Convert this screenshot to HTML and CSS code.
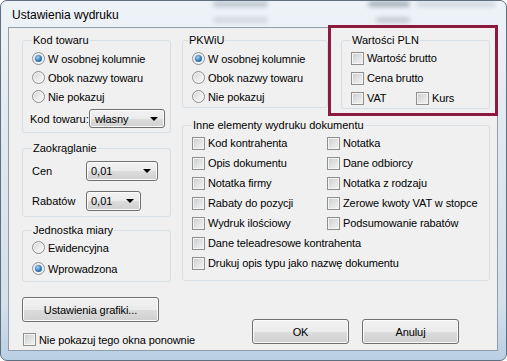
FILE: index.html
```html
<!DOCTYPE html>
<html lang="pl">
<head>
    <meta charset="UTF-8">
    <title>Ustawienia wydruku</title>
    <link rel="stylesheet" href="styles.css">
</head>
<body>

<div class="window">
    <div class="titlebar">
        <!-- blurred content seen through the glass frame -->
        <span class="ghost g1"></span>
        <span class="ghost g2"></span>
        <span class="ghost g3"></span>
        <span class="ghost g4"></span>
        <span class="ghost g5"></span>
        <span class="title">Ustawienia wydruku</span>
    </div>

    <div class="client">
        <div class="col-left">
            <fieldset class="group kod">
                <legend>Kod towaru</legend>
                <label class="opt"><span class="radio on"></span>W osobnej kolumnie</label>
                <label class="opt"><span class="radio"></span>Obok nazwy towaru</label>
                <label class="opt"><span class="radio"></span>Nie pokazuj</label>
                <div class="field-row kod-row">
                    <span class="field-label">Kod towaru:</span>
                    <span class="combo combo-kod">własny<span class="arrow"></span></span>
                </div>
            </fieldset>

            <fieldset class="group zaokr">
                <legend>Zaokrąglanie</legend>
                <div class="field-row">
                    <span class="field-label short">Cen</span>
                    <span class="combo combo-cen">0,01<span class="arrow"></span></span>
                </div>
                <div class="field-row">
                    <span class="field-label short">Rabatów</span>
                    <span class="combo combo-rab">0,01<span class="arrow"></span></span>
                </div>
            </fieldset>

            <fieldset class="group jm">
                <legend>Jednostka miary</legend>
                <label class="opt tall"><span class="radio"></span>Ewidencyjna</label>
                <label class="opt tall"><span class="radio on"></span>Wprowadzona</label>
            </fieldset>

            <button class="btn btn-graf">Ustawienia grafiki...</button>

            <label class="opt no-show"><span class="check"></span>Nie pokazuj tego okna ponownie</label>
        </div>

        <div class="col-right">
            <div class="top-row">
                <fieldset class="group pkwiu">
                    <legend>PKWiU</legend>
                    <label class="opt"><span class="radio on"></span>W osobnej kolumnie</label>
                    <label class="opt"><span class="radio"></span>Obok nazwy towaru</label>
                    <label class="opt"><span class="radio"></span>Nie pokazuj</label>
                </fieldset>

                <fieldset class="group pln">
                    <legend>Wartości PLN</legend>
                    <label class="opt wide"><span class="check"></span>Wartość brutto</label>
                    <label class="opt wide"><span class="check"></span>Cena brutto</label>
                    <div class="pair">
                        <label class="opt wide vat"><span class="check"></span>VAT</label>
                        <label class="opt wide"><span class="check"></span>Kurs</label>
                    </div>
                </fieldset>
            </div>

            <fieldset class="group inne">
                <legend>Inne elementy wydruku dokumentu</legend>
                <div class="inne-grid">
                    <label class="opt wide"><span class="check"></span>Kod kontrahenta</label>
                    <label class="opt wide"><span class="check"></span>Notatka</label>
                    <label class="opt wide"><span class="check"></span>Opis dokumentu</label>
                    <label class="opt wide"><span class="check"></span>Dane odbiorcy</label>
                    <label class="opt wide"><span class="check"></span>Notatka firmy</label>
                    <label class="opt wide"><span class="check"></span>Notatka z rodzaju</label>
                    <label class="opt wide"><span class="check"></span>Rabaty do pozycji</label>
                    <label class="opt wide"><span class="check"></span>Zerowe kwoty VAT w stopce</label>
                    <label class="opt wide"><span class="check"></span>Wydruk ilościowy</label>
                    <label class="opt wide"><span class="check"></span>Podsumowanie rabatów</label>
                    <label class="opt wide span"><span class="check"></span>Dane teleadresowe kontrahenta</label>
                    <label class="opt wide span"><span class="check"></span>Drukuj opis typu jako nazwę dokumentu</label>
                </div>
            </fieldset>

            <div class="buttons">
                <button class="btn btn-dlg">OK</button>
                <button class="btn btn-dlg">Anuluj</button>
            </div>
        </div>

        <div class="highlight"></div>
    </div>
</div>

</body>
</html>
```

FILE: styles.css
```css
body {
    margin: 0;
    padding: 0;
    font-family: "Liberation Sans", Arial, sans-serif;
    font-size: 11px;
    color: #000;
    background-color: #fff;
}
.window {
    width: 507px;
    height: 361px;
    box-sizing: border-box;
    padding: 0 8px 9px 7px;
    border: 1px solid #5f6f80;
    border-radius: 7px;
    background: linear-gradient(to bottom, #eef3f7 0%, #dfe8f0 40%, #d3e0ec 85%, #b9cfe4 100%);
    display: flex;
    flex-direction: column;
}
.titlebar {
    position: relative;
    height: 26px;
    flex-shrink: 0;
    overflow: hidden;
}
.title {
    position: relative;
    display: block;
    padding: 7px 0 0 4px;
    font-size: 12px;
    line-height: 14px;
    color: #000;
}
.ghost {
    position: absolute;
    height: 6px;
    border-radius: 3px;
    background-color: #6c7a89;
    opacity: 0.35;
    filter: blur(2px);
}
.g1 { left: 205px; top: 0; width: 55px; }
.g2 { left: 360px; top: 0; width: 42px; opacity: 0.5; }
.g3 { left: 408px; top: 0; width: 80px; opacity: 0.2; }
.g4 { left: 205px; top: 16px; width: 55px; opacity: 0.2; }
.g5 { left: 368px; top: 16px; width: 34px; opacity: 0.3; }

.client {
    position: relative;
    flex: 1;
    display: flex;
    gap: 11px;
    padding: 6px 0 0 13px;
    border: 1px solid #8e9cab;
    background-color: #f0f0f0;
}
.col-left {
    width: 149px;
    display: flex;
    flex-direction: column;
}
.col-right {
    width: 308px;
    display: flex;
    flex-direction: column;
}

/* group boxes */
.group {
    margin: 0;
    min-width: 0;
    padding: 2px 4px 3px 9px;
    border: 1px solid #d5dfe5;
    border-radius: 3px;
}
.group legend {
    padding: 0 1px;
    line-height: 13px;
}
.kod { padding-bottom: 4px; }
.zaokr { margin-top: 9px; padding-top: 6px; padding-bottom: 5px; }
.jm { margin-top: 7px; padding-top: 0; padding-bottom: 2px; }
.pkwiu { width: 146px; box-sizing: border-box; padding-bottom: 1px; }
.pkwiu legend { margin-left: -4px; }
.pln { width: 149px; box-sizing: border-box; padding: 1px 4px 0 9px; }
.inne { margin-top: 10px; padding: 1px 4px 7px 9px; }

.top-row {
    display: flex;
    justify-content: space-between;
    align-items: flex-start;
}

/* options */
.opt {
    display: flex;
    align-items: center;
    height: 19px;
    white-space: nowrap;
    letter-spacing: -0.1px;
}
.opt.tall { height: 21px; }
.opt.wide { height: 20px; }
.radio, .check {
    width: 13px;
    height: 13px;
    box-sizing: border-box;
    flex-shrink: 0;
    margin-right: 3px;
}
.radio {
    position: relative;
    border-radius: 50%;
    border: 1px solid #8e8f8f;
    background: linear-gradient(135deg, #d2d2d2 0%, #ececec 55%, #fbfbfb 100%);
    box-shadow: inset 0 0 0 1px #f6f6f6;
}
.radio.on::after {
    content: "";
    position: absolute;
    left: 2px;
    top: 2px;
    width: 7px;
    height: 7px;
    border-radius: 50%;
    background: radial-gradient(circle at 40% 35%, #a9d6f6 0%, #3d86c6 45%, #16487c 100%);
}
.check {
    border: 1px solid #8f8f8f;
    background: linear-gradient(135deg, #c9cbcd 0%, #e2e3e4 55%, #f3f3f3 100%);
    box-shadow: inset 0 0 0 1px #f4f4f4;
}
.pair {
    display: flex;
}
.vat { width: 65px; }
.inne-grid {
    display: grid;
    grid-template-columns: 135px 1fr;
}
.inne-grid .span { grid-column: span 2; }

/* combo boxes and labelled rows */
.field-row {
    display: flex;
    align-items: center;
    height: 20px;
}
.zaokr .field-row + .field-row { margin-top: 10px; }
.kod-row { margin: 3px 0 0 -2px; height: 19px; }
.field-label { width: 59px; }
.field-label.short { width: 54px; }
.combo, .btn {
    box-sizing: border-box;
    border: 1px solid #707070;
    border-radius: 3px;
    background: linear-gradient(to bottom, #f2f2f2 0%, #ebebeb 50%, #dddddd 51%, #cfcfcf 100%);
    box-shadow: inset 0 0 0 1px #fbfbfb;
    color: #000;
}
.combo {
    display: flex;
    align-items: center;
    height: 100%;
    padding-left: 4px;
}
.combo-kod { width: 76px; padding-left: 5px; }
.combo-cen { width: 72px; }
.combo-rab { width: 55px; }
.arrow {
    margin-left: auto;
    margin-right: 6px;
    width: 0;
    height: 0;
    border-left: 4px solid transparent;
    border-right: 4px solid transparent;
    border-top: 4px solid #000;
}

/* buttons */
.btn {
    font-family: inherit;
    font-size: 11px;
    padding: 0;
    height: 25px;
    letter-spacing: -0.1px;
}
.btn-graf {
    margin-top: 15px;
    width: 137px;
}
.no-show {
    margin-top: 11px;
    height: 13px;
}
.no-show .check { margin-left: 1px; }
.buttons {
    display: flex;
    justify-content: flex-end;
    gap: 13px;
    margin-top: 38px;
    padding-right: 31px;
}
.btn-dlg { width: 97px; }

/* red annotation frame drawn over the dialog */
.highlight {
    position: absolute;
    left: 319px;
    top: -3px;
    width: 164px;
    height: 85px;
    border: 3px solid #8c1a3e;
}
```
